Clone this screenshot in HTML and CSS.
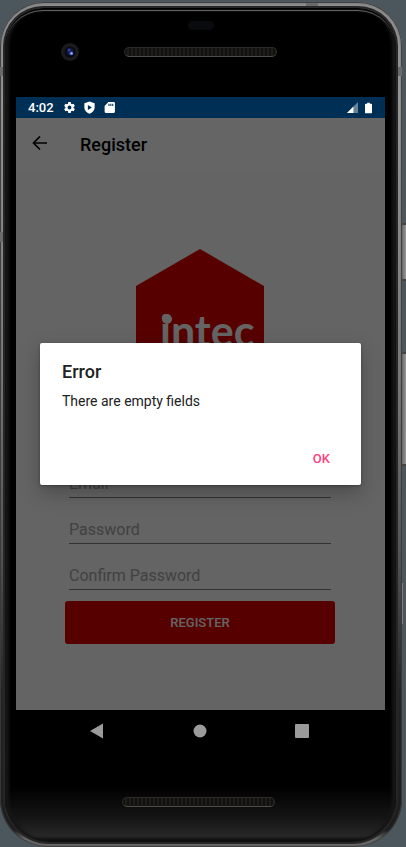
FILE: index.html
```html
<!DOCTYPE html>
<html lang="en">
<head>
<meta charset="utf-8">
<meta name="viewport" content="width=device-width, initial-scale=1">
<title>Register</title>
<link rel="stylesheet" href="styles.css">
</head>
<body>
<div class="phone">
  <span class="key key-power"></span>
  <span class="key key-volume"></span>
  <span class="key key-edge"></span>
  <span class="seam seam-upper"></span>
  <span class="seam seam-left"></span>
  <span class="seam seam-top"></span>
  <div class="face">
    <div class="bezel-top">
      <span class="sensor"></span>
      <div class="bezel-row">
        <svg class="camera" viewBox="0 0 18 18" aria-hidden="true">
          <circle cx="9" cy="9" r="9" fill="#1b1a1c"/>
          <circle cx="9" cy="9" r="5.5" fill="#08080f"/>
          <circle cx="9" cy="8.5" r="3.5" fill="#15194a"/>
          <circle cx="8" cy="7" r="1.3" fill="#3646a5"/>
          <circle cx="10.4" cy="10.4" r="1.9" fill="#4c65cf"/>
          <circle cx="10.6" cy="10.4" r=".8" fill="#b5c5ff"/>
        </svg>
        <span class="speaker"></span>
      </div>
    </div>

    <header class="status">
      <span class="time">4:02</span>
      <svg class="status-icon" viewBox="0 0 24 24" aria-hidden="true"><path fill="#fff" fill-rule="evenodd" d="M19.400 13a7 7 0 0 0 0-2l2.500-1.900-2.400-4.200-2.900 1.200-1.800-1L14.400 2H9.600l-.4 3.100-1.800 1-2.900-1.200-2.400 4.200L4.600 11a7 7 0 0 0 0 2l-2.500 1.900 2.400 4.200 2.900-1.200 1.800 1 .4 3.100h4.800l.4-3.100 1.800-1 2.900 1.200 2.400-4.200zM12 15.600a3.600 3.600 0 1 1 0-7.200 3.600 3.600 0 0 1 0 7.200z"/></svg>
      <svg class="status-icon" viewBox="0 0 24 24" aria-hidden="true"><path fill="#fff" fill-rule="evenodd" d="M12 1 2.500 4v8c0 5.500 4 9.500 9.500 11.500 5.500-2 9.500-6 9.500-11.500V4zM9 7.500v9l7.500-4.500z"/></svg>
      <svg class="status-icon" viewBox="0 0 24 24" aria-hidden="true"><path fill="#fff" fill-rule="evenodd" d="M20 2H10L3 9v11a2 2 0 0 0 2 2h15a2 2 0 0 0 2-2V4a2 2 0 0 0-2-2zM10 5h2v4h-2zm3.500 0h2v4h-2zM17 5h2v4h-2z"/></svg>
      <span class="spacer"></span>
      <svg class="signal" viewBox="0 0 12 12" aria-hidden="true"><path fill="#fff" fill-opacity=".4" d="M12 0v12H0z"/><path fill="#fff" d="M7 5v7H0z"/></svg>
      <svg class="battery" viewBox="0 0 8 12" aria-hidden="true"><path fill="#fff" d="M2.500 0h3v1H7a1 1 0 0 1 1 1v9a1 1 0 0 1-1 1H1a1 1 0 0 1-1-1V2a1 1 0 0 1 1-1h1.500z"/></svg>
    </header>

    <div class="app">
      <nav class="appbar">
        <button class="back" type="button" aria-label="Back">
          <svg viewBox="0 0 16 16" aria-hidden="true"><path d="M15 7H2M8 .5 1.500 7 8 13.500" fill="none" stroke="#000" stroke-width="1.700"/></svg>
        </button>
        <h1>Register</h1>
      </nav>
      <main class="content">
        <svg class="logo" viewBox="0 0 128 147" role="img" aria-label="intec">
          <path fill="#d90000" d="M64 0l64 37v73l-64 37L0 110V37z"/>
          <text class="logo-text" x="24" y="98">intec</text>
          <circle cx="31" cy="70" r="5" fill="#fafafa"/>
        </svg>
        <form class="form">
          <input type="email" placeholder="Email" aria-label="Email">
          <input type="password" placeholder="Password" aria-label="Password">
          <input type="password" placeholder="Confirm Password" aria-label="Confirm Password">
          <button class="submit" type="button">REGISTER</button>
        </form>
      </main>
      <div class="scrim">
        <section class="dialog" role="alertdialog" aria-labelledby="dialog-title" aria-describedby="dialog-text">
          <h2 id="dialog-title">Error</h2>
          <p id="dialog-text">There are empty fields</p>
          <button class="ok" type="button">OK</button>
        </section>
      </div>
    </div>

    <nav class="navbar">
      <button type="button" aria-label="Back"><svg viewBox="0 0 16 16"><path fill="#9b9b9b" d="M14 .5v15L1 8z"/></svg></button>
      <button type="button" aria-label="Home"><svg viewBox="0 0 16 16"><circle cx="8" cy="8" r="6.500" fill="#9b9b9b"/></svg></button>
      <button type="button" aria-label="Overview"><svg viewBox="0 0 16 16"><rect x="1" y="1" width="14" height="14" rx="1" fill="#9b9b9b"/></svg></button>
    </nav>
    <div class="bezel-bottom"><span class="speaker"></span></div>
  </div>
</div>
</body>
</html>
```
FILE: styles.css
```css
* { box-sizing: border-box; }

body {
  margin: 0;
  background: #4b575d;
  font-family: Roboto, "Liberation Sans", sans-serif;
  overflow: hidden;
}

button {
  padding: 0;
  border: 0;
  background: none;
  font: inherit;
}

svg { display: block; }

/* Device */
.phone {
  position: relative;
  display: flex;
  min-height: calc(100vh - 2px);
  margin: 2px 4px 0 0;
  padding: 6px 6px 5px 5px;
  border-radius: 44px 44px 48px 48px;
  background: linear-gradient(#8a8a8a, #969696 12%, #777 45%, #555 65%, #242424 82%, #1c1c1c 98%, #666 99%);
  box-shadow: inset 0 0 1px 1px #3a3a3a;
}

.face {
  position: relative;
  flex: 1;
  display: flex;
  flex-direction: column;
  padding: 0 11px;
  border-radius: 38px 38px 44px 44px;
  background: linear-gradient(to top, #050505, #272727 6px, #151515 24px, #000 56px);
  box-shadow: inset 0 2px 1px #000, inset 0 4px 1px -1px #777, inset 4px 0 3px #161616, inset -4px 0 3px #161616, 0 0 0 2px #262626;
}

.bezel-top {
  display: flex;
  flex-direction: column;
  align-items: center;
  height: 89px;
  padding-top: 13px;
}

.sensor {
  width: 26px;
  height: 9px;
  border-radius: 5px;
  background: #0a0b0e;
}

.bezel-row {
  display: grid;
  grid-template-columns: 1fr auto 1fr;
  align-items: center;
  width: 100%;
  margin-top: 13px;
}

.camera {
  width: 18px;
  height: 18px;
  justify-self: center;
}

.speaker {
  width: 153px;
  height: 10px;
  border: 1px solid #2c2a28;
  border-bottom-color: #504d48;
  border-radius: 5px;
  background: repeating-linear-gradient(90deg, #12110f 0 2px, #1f1d19 2px 4px);
}

.bezel-bottom {
  display: flex;
  align-items: center;
  justify-content: center;
  height: 90px;
  padding: 9px 4px 0 0;
}

.key {
  position: absolute;
  left: 100%;
  width: 4px;
  border: solid #444;
  border-width: 2px 0;
  background: linear-gradient(90deg, #666, #999);
}

.key-power { top: 221px; height: 58px; }
.key-volume { top: 350px; height: 114px; }
.key-edge { top: 581px; width: 1px; height: 41px; border: 0; }

.seam {
  position: absolute;
  background: #6a6a6a;
}

.seam-upper {
  top: 65px;
  left: 0;
  right: 0;
  height: 9px;
}

.seam-left {
  top: 230px;
  left: 0;
  width: 5px;
  height: 10px;
}

.seam-top {
  top: 1px;
  right: 84px;
  width: 12px;
  height: 4px;
}

/* Status bar */
.status {
  display: flex;
  align-items: center;
  gap: 7px;
  height: 21px;
  padding: 0 13px 0 12px;
  background: #002f56;
  color: #fff;
}

.time {
  margin-right: 2px;
  font-size: 13px;
  font-weight: 500;
}

.status-icon {
  width: 13px;
  height: 13px;
}

.spacer { flex: 1; }

.signal {
  width: 11px;
  height: 11px;
}

.battery {
  width: 7px;
  height: 12px;
}

/* App */
.app {
  position: relative;
  flex: 1;
  display: flex;
  flex-direction: column;
  background: #fafafa;
}

.appbar {
  display: flex;
  align-items: center;
  gap: 32px;
  height: 52px;
  padding: 0 16px;
  background: #fdfdfd;
}

.back svg {
  width: 16px;
  height: 16px;
}

.appbar h1 {
  margin: 0;
  font-size: 18px;
  font-weight: 500;
}

.content {
  display: flex;
  flex-direction: column;
  align-items: center;
  padding: 79px 50px 0 49px;
}

.logo {
  width: 128px;
  height: 147px;
}

.logo-text {
  fill: #fafafa;
  font-family: Lato, sans-serif;
  font-size: 43px;
  font-weight: 700;
}

.form {
  display: flex;
  flex-direction: column;
  gap: 14px;
  width: 100%;
  margin-top: 70px;
}

.form input {
  height: 32px;
  margin: 0 4px;
  padding: 4px 0 0;
  border: 0;
  border-bottom: 1px solid #808080;
  border-radius: 0;
  background: none;
  font: 16px Roboto, sans-serif;
}

.form input::placeholder {
  color: #a4a4a4;
  opacity: 1;
}

.submit {
  height: 43px;
  margin-top: -3px;
  border-radius: 3px;
  background: #d90000;
  color: #fafafa;
  font-size: 13px;
  font-weight: 500;
}

/* Dialog */
.scrim {
  position: absolute;
  inset: 0;
  display: grid;
  align-items: center;
  padding: 0 24px;
  background: rgba(0, 0, 0, .6);
}

.dialog {
  display: flex;
  flex-direction: column;
  padding: 18px 22px;
  border-radius: 2px;
  background: #fff;
  box-shadow: 0 8px 20px rgba(0, 0, 0, .25), 0 1px 3px rgba(0, 0, 0, .3);
  color: #212121;
}

.dialog h2 {
  margin: 0;
  font-size: 18px;
  font-weight: 500;
  line-height: 22px;
}

.dialog p {
  margin: 8px 0 40px;
  font-size: 14px;
  line-height: 20px;
}

.ok {
  align-self: flex-end;
  margin-right: 9px;
  color: #ff4081;
  font-size: 13px;
  font-weight: 500;
  line-height: 16px;
}

/* Navigation bar */
.navbar {
  display: flex;
  align-items: center;
  justify-content: space-between;
  height: 42px;
  padding: 0 75px 0 73px;
  background: #000;
}

.navbar svg {
  width: 16px;
  height: 16px;
}
```
